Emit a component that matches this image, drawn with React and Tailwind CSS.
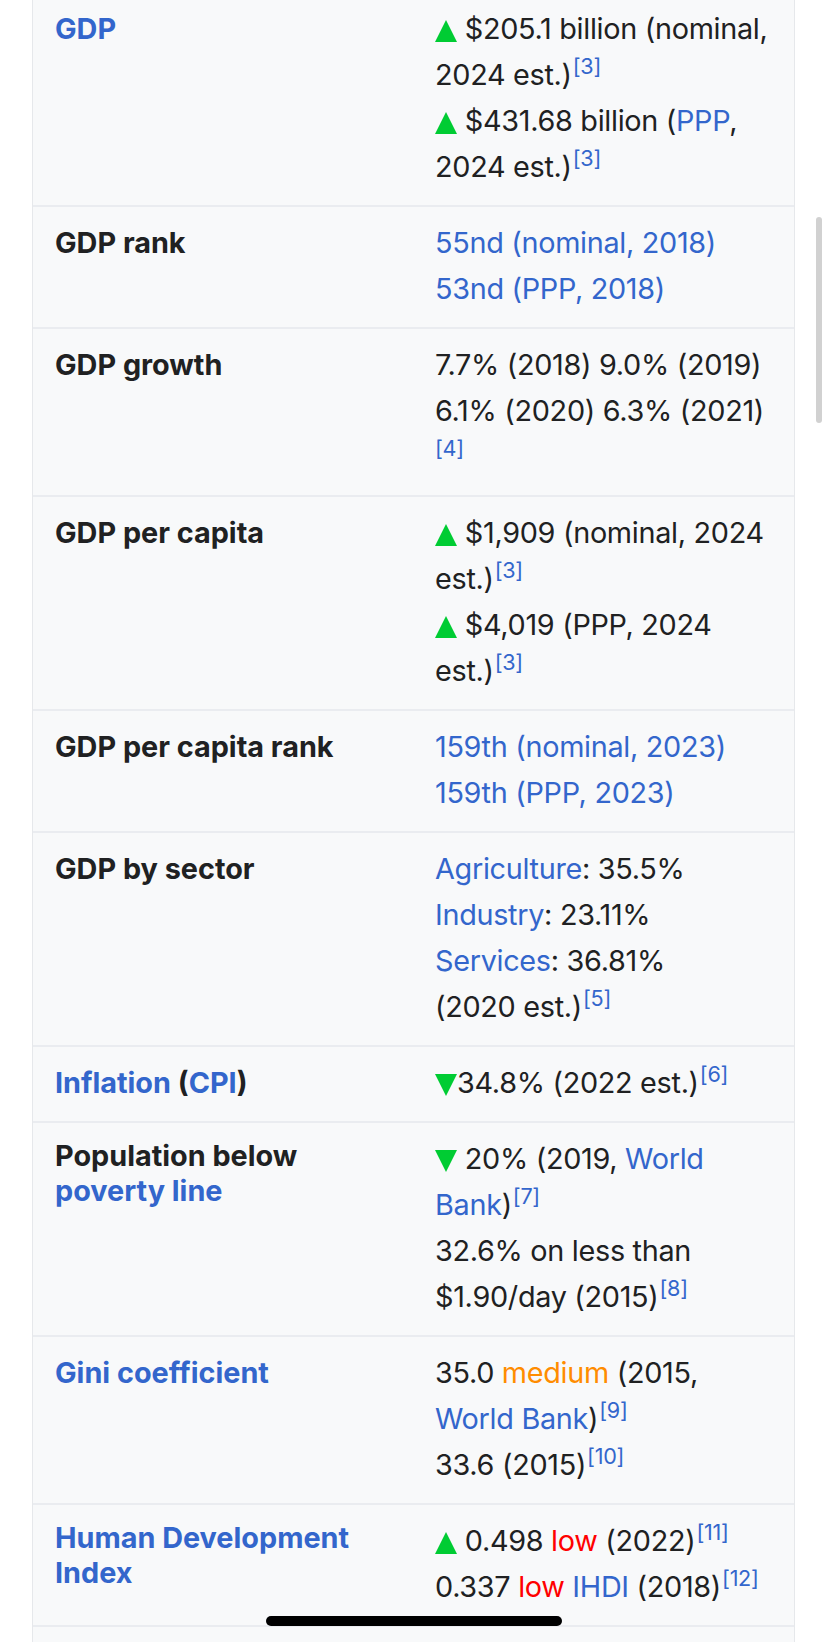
import React from "react";

const Up = () => (
  <svg width="22" height="22" viewBox="0 0 22 22" className="inline-block align-[-3px]">
    <polygon points="11,0 22,22 0,22" fill="#00cc33" />
  </svg>
);
const Down = () => (
  <svg width="22" height="22" viewBox="0 0 22 22" className="inline-block align-[-3px]">
    <polygon points="0,0 22,0 11,22" fill="#00cc33" />
  </svg>
);

const A = ({ children }) => <a className="text-[#3366cc]">{children}</a>;
const Ref = ({ n }) => <sup className="text-[#3366cc] ml-[1px]">[{n}]</sup>;
const L = ({ children }) => <div className="whitespace-nowrap">{children}</div>;

const Row = ({ label, children, first, multi }) => (
  <div
    className={
      "grid grid-cols-[382px_1fr] " + (first ? "" : "border-t-2 border-[#eaecf0]")
    }
  >
    <div
      className={
        "pl-[22px] pr-[16px] pb-[15px] font-bold text-[28.8px] leading-[35px] text-[#202122] " +
        (multi ? "pt-[15px]" : "pt-[18px]")
      }
    >
      {label}
    </div>
    <div className="pl-[20px] pr-[20px] pt-[13px] pb-[15px] text-[28.8px] leading-[46px] tracking-[-0.3px] text-[#202122]">
      {children}
    </div>
  </div>
);

export default function App() {
  return (
    <div className="relative w-[828px] h-[1642px] overflow-hidden bg-white font-['Inter',sans-serif]">
      <div className="ml-[32px] w-[763px] -mt-[7px] border-x border-[#e6e8eb] bg-[#f8f9fa]">
        <Row first label={<A>GDP</A>}>
          <L>
            <Up /> $205.1 billion (nominal,
          </L>
          <L>
            2024 est.)<Ref n="3" />
          </L>
          <L>
            <Up /> $431.68 billion (<A>PPP</A>,
          </L>
          <L>
            2024 est.)<Ref n="3" />
          </L>
        </Row>
        <Row label="GDP rank">
          <L>
            <A>55nd (nominal, 2018)</A>
          </L>
          <L>
            <A>53nd (PPP, 2018)</A>
          </L>
        </Row>
        <Row label="GDP growth">
          <L>7.7% (2018) 9.0% (2019)</L>
          <L>6.1% (2020) 6.3% (2021)</L>
          <div>
            <sup className="text-[#3366cc]">[4]</sup>
          </div>
        </Row>
        <Row label="GDP per capita">
          <L>
            <Up /> $1,909 (nominal, 2024
          </L>
          <L>
            est.)<Ref n="3" />
          </L>
          <L>
            <Up /> $4,019 (PPP, 2024
          </L>
          <L>
            est.)<Ref n="3" />
          </L>
        </Row>
        <Row label="GDP per capita rank">
          <L>
            <A>159th (nominal, 2023)</A>
          </L>
          <L>
            <A>159th (PPP, 2023)</A>
          </L>
        </Row>
        <Row label="GDP by sector">
          <L>
            <A>Agriculture</A>: 35.5%
          </L>
          <L>
            <A>Industry</A>: 23.11%
          </L>
          <L>
            <A>Services</A>: 36.81%
          </L>
          <L>
            (2020 est.)<Ref n="5" />
          </L>
        </Row>
        <Row
          label={
            <>
              <A>Inflation</A> (<A>CPI</A>)
            </>
          }
        >
          <L>
            <Down />
            34.8% (2022 est.)<Ref n="6" />
          </L>
        </Row>
        <Row
          multi
          label={
            <>
              <div>Population below</div>
              <div>
                <A>poverty line</A>
              </div>
            </>
          }
        >
          <L>
            <Down /> 20% (2019, <A>World</A>
          </L>
          <L>
            <A>Bank</A>)<Ref n="7" />
          </L>
          <L>32.6% on less than</L>
          <L>
            $1.90/day (2015)<Ref n="8" />
          </L>
        </Row>
        <Row label={<A>Gini coefficient</A>}>
          <L>
            35.0 <span className="text-[#ff8c00]">medium</span> (2015,
          </L>
          <L>
            <A>World Bank</A>)<Ref n="9" />
          </L>
          <L>
            33.6 (2015)<Ref n="10" />
          </L>
        </Row>
        <Row
          multi
          label={
            <A>
              <div>Human Development</div>
              <div>Index</div>
            </A>
          }
        >
          <L>
            <Up /> 0.498 <span className="text-[#ff0000]">low</span> (2022)<Ref n="11" />
          </L>
          <L>
            0.337 <span className="text-[#ff0000]">low</span> <A>IHDI</A> (2018)<Ref n="12" />
          </L>
        </Row>
        <div className="h-[60px] border-t-2 border-[#eaecf0]" />
      </div>
      <div className="absolute left-[816px] top-[217px] w-[6px] h-[206px] rounded-full bg-[#d1d1d1]" />
      <div className="absolute left-[266px] top-[1616px] w-[296px] h-[10px] rounded-full bg-black" />
    </div>
  );
}
